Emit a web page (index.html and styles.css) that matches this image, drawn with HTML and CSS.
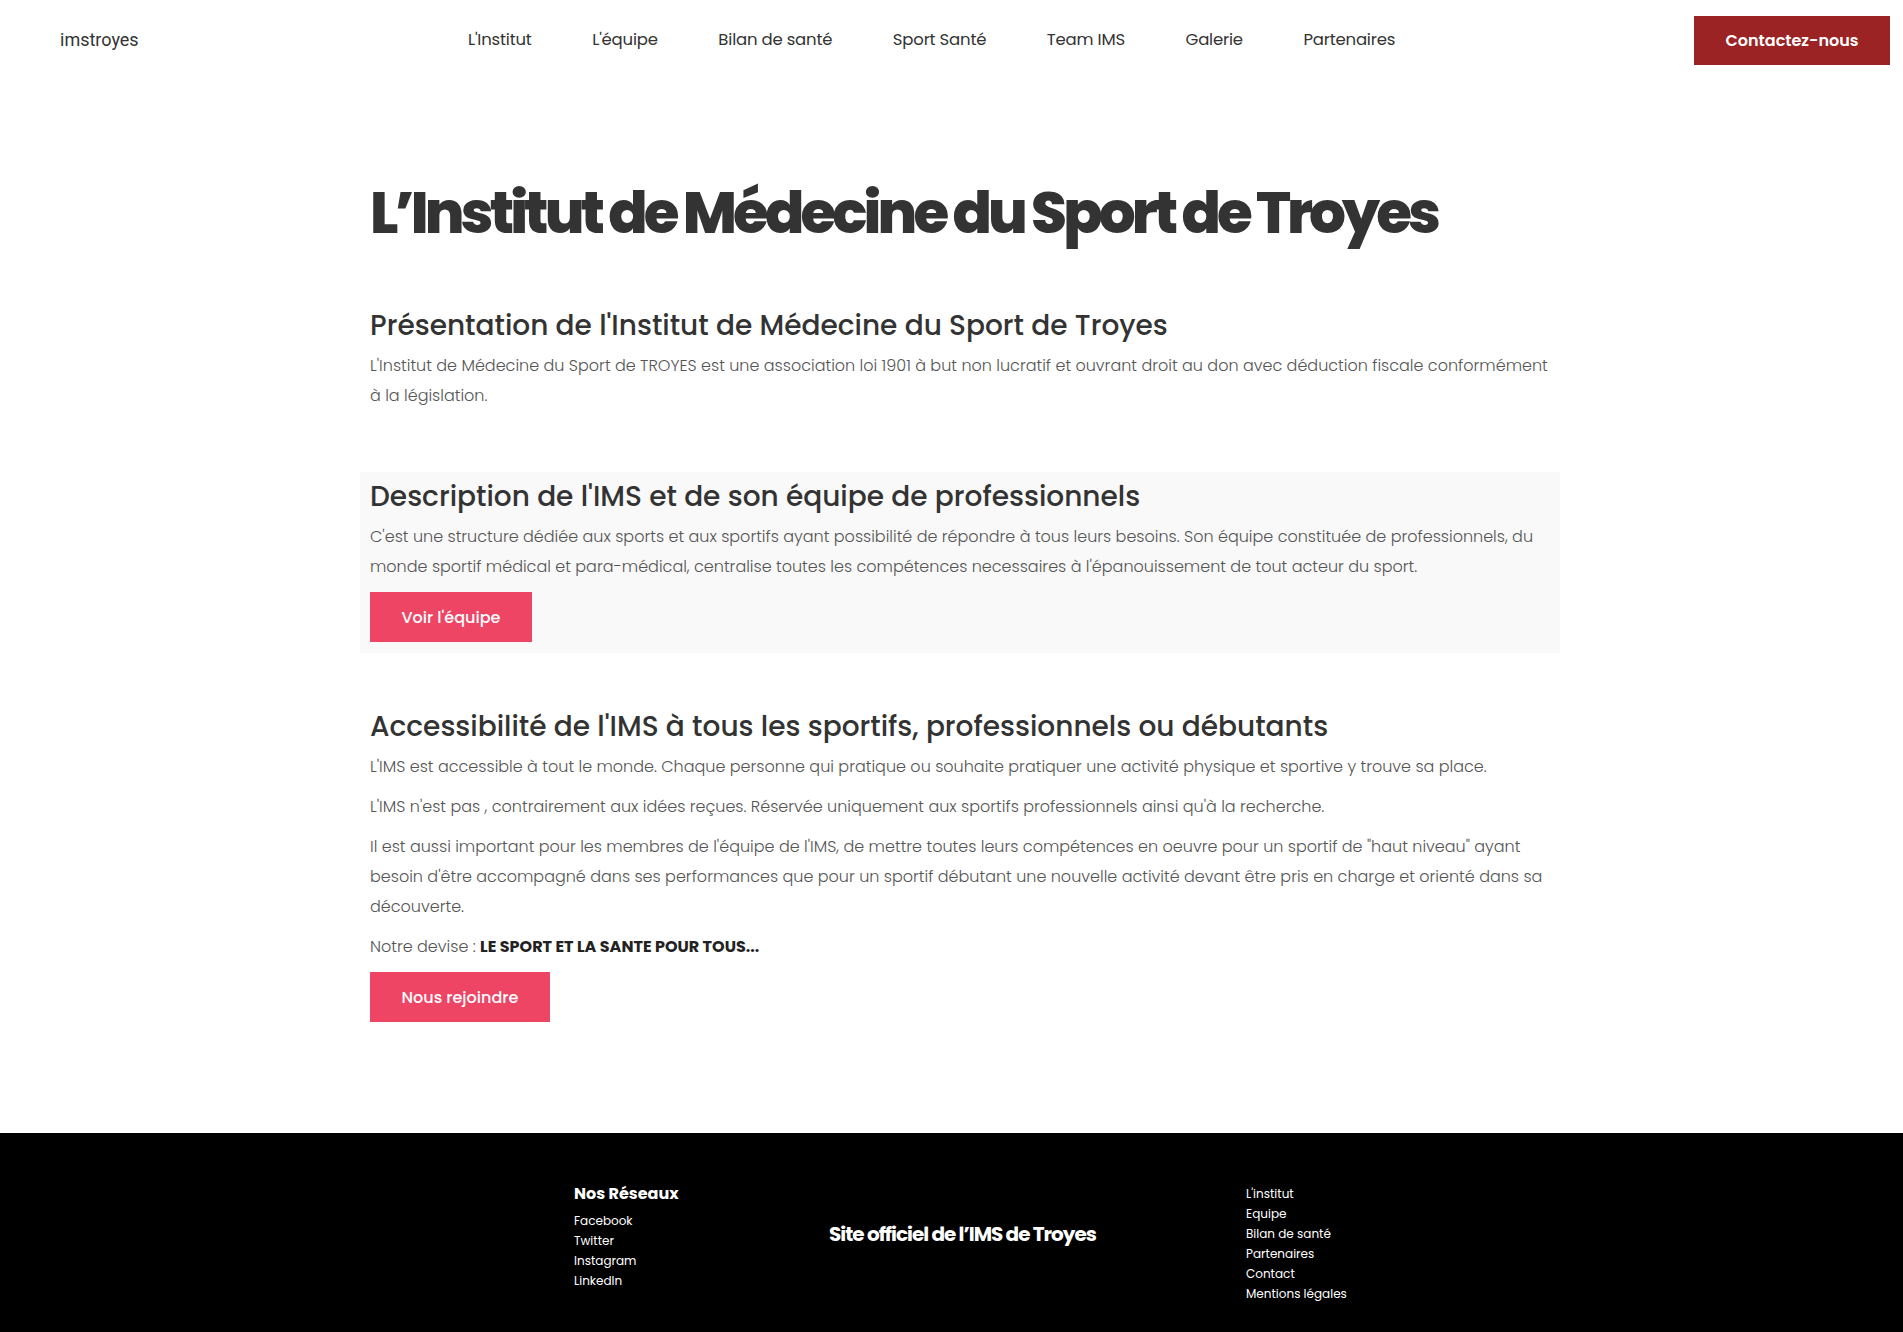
FILE: index.html
```html
<!DOCTYPE html>
<html lang="fr">
<head>
<meta charset="utf-8">
<title>L'Institut de Médecine du Sport de Troyes</title>
<link rel="stylesheet" href="styles.css">
</head>
<body>
<header class="site-header">
  <a class="logo" href="#">imstroyes</a>
  <nav class="main-nav">
    <a href="#">L'Institut</a>
    <a href="#">L'équipe</a>
    <a href="#">Bilan de santé</a>
    <a href="#">Sport Santé</a>
    <a href="#">Team IMS</a>
    <a href="#">Galerie</a>
    <a href="#">Partenaires</a>
  </nav>
  <a class="btn-contact" href="#">Contactez-nous</a>
</header>

<main class="content">
  <h1 class="page-title">L’Institut de Médecine du Sport de Troyes</h1>

  <section class="block">
    <h2>Présentation de l'Institut de Médecine du Sport de Troyes</h2>
    <p>L'Institut de Médecine du Sport de TROYES est une association loi 1901 à but non lucratif et ouvrant droit au don avec déduction fiscale conformément à la législation.</p>
  </section>

  <section class="block block-grey">
    <h2>Description de l'IMS et de son équipe de professionnels</h2>
    <p>C'est une structure dédiée aux sports et aux sportifs ayant possibilité de répondre à tous leurs besoins. Son équipe constituée de professionnels, du monde sportif médical et para-médical, centralise toutes les compétences necessaires à l'épanouissement de tout acteur du sport.</p>
    <a class="btn-pink" href="#">Voir l'équipe</a>
  </section>

  <section class="block block-last">
    <h2>Accessibilité de l'IMS à tous les sportifs, professionnels ou débutants</h2>
    <p>L'IMS est accessible à tout le monde. Chaque personne qui pratique ou souhaite pratiquer une activité physique et sportive y trouve sa place.</p>
    <p>L'IMS n'est pas , contrairement aux idées reçues. Réservée uniquement aux sportifs professionnels ainsi qu'à la recherche.</p>
    <p>Il est aussi important pour les membres de l'équipe de l'IMS, de mettre toutes leurs compétences en oeuvre pour un sportif de "haut niveau" ayant besoin d'être accompagné dans ses performances que pour un sportif débutant une nouvelle activité devant être pris en charge et orienté dans sa découverte.</p>
    <p>Notre devise : <strong>LE SPORT ET LA SANTE POUR TOUS...</strong></p>
    <a class="btn-pink" href="#">Nous rejoindre</a>
  </section>
</main>

<footer class="site-footer">
  <div class="footer-col footer-social">
    <h4>Nos Réseaux</h4>
    <a href="#">Facebook</a>
    <a href="#">Twitter</a>
    <a href="#">Instagram</a>
    <a href="#">LinkedIn</a>
  </div>
  <div class="footer-col footer-center">
    <p class="footer-title">Site officiel de l’IMS de Troyes</p>
  </div>
  <div class="footer-col footer-links">
    <a href="#">L'institut</a>
    <a href="#">Equipe</a>
    <a href="#">Bilan de santé</a>
    <a href="#">Partenaires</a>
    <a href="#">Contact</a>
    <a href="#">Mentions légales</a>
  </div>
</footer>
</body>
</html>
```

FILE: styles.css
```css
* { box-sizing: border-box; }

html, body {
  margin: 0;
  padding: 0;
  background: #ffffff;
}

body {
  font-family: "Poppins", "Open Sans", "Noto Sans", sans-serif;
  color: #333333;
}

a { text-decoration: none; }

/* Header */
.site-header {
  display: flex;
  align-items: center;
  height: 79px;
  padding: 0 13px 0 60px;
}

.logo {
  width: 408px;
  font-family: "Roboto", sans-serif;
  font-size: 18px;
  color: #333333;
}

.main-nav {
  display: flex;
  gap: 60.6px;
}

.main-nav a {
  font-size: 16.5px;
  color: #333333;
  letter-spacing: -0.2px;
}

.btn-contact {
  margin-left: auto;
  display: flex;
  align-items: center;
  justify-content: center;
  width: 196px;
  height: 49px;
  background: #9b2323;
  color: #ffffff;
  font-size: 16px;
  font-weight: 600;
  margin-top: 1px;
}

/* Content */
.content {
  margin-left: 360px;
  width: 1200px;
  padding: 98px 0 111px;
}

.page-title {
  margin: 0 0 60px;
  padding: 0 10px;
  font-size: 58px;
  line-height: 72px;
  font-weight: 800;
  letter-spacing: -3.9px;
  color: #333333;
}

.block {
  padding: 0 10px;
}

.block h2 {
  margin: 0 0 8px;
  font-size: 28px;
  line-height: 34px;
  font-weight: 500;
  letter-spacing: 0;
  color: #333333;
}

.block p {
  margin: 0 0 10px;
  font-size: 16px;
  line-height: 30px;
  font-weight: 300;
  color: #555555;
}

.block p strong {
  font-weight: 700;
  color: #222222;
}

.block-grey {
  margin-top: 61px;
  padding: 8px 10px 11px;
  background: #f9f9f9;
}

.block-last {
  margin-top: 57px;
}

.btn-pink {
  display: inline-flex;
  align-items: center;
  justify-content: center;
  height: 50px;
  padding: 0 31.5px;
  background: #ef4565;
  color: #ffffff;
  font-size: 16px;
  font-weight: 500;
}

/* Footer */
.site-footer {
  display: flex;
  height: 200px;
  background: #000000;
  color: #ffffff;
  padding: 51px 0 0 574px;
}

.footer-col a {
  display: block;
  color: #ffffff;
  font-size: 12px;
  line-height: 20px;
}

.footer-social {
  width: 255px;
}

.footer-social h4 {
  margin: 0 0 7px;
  font-size: 16px;
  line-height: 20px;
  font-weight: 700;
}

.footer-center {
  width: 267px;
  text-align: center;
  padding-top: 40px;
}

.footer-title {
  margin: 0;
  font-size: 20px;
  line-height: 20px;
  font-weight: 700;
  letter-spacing: -1px;
}

.footer-links {
  margin-left: 150px;
}
```
